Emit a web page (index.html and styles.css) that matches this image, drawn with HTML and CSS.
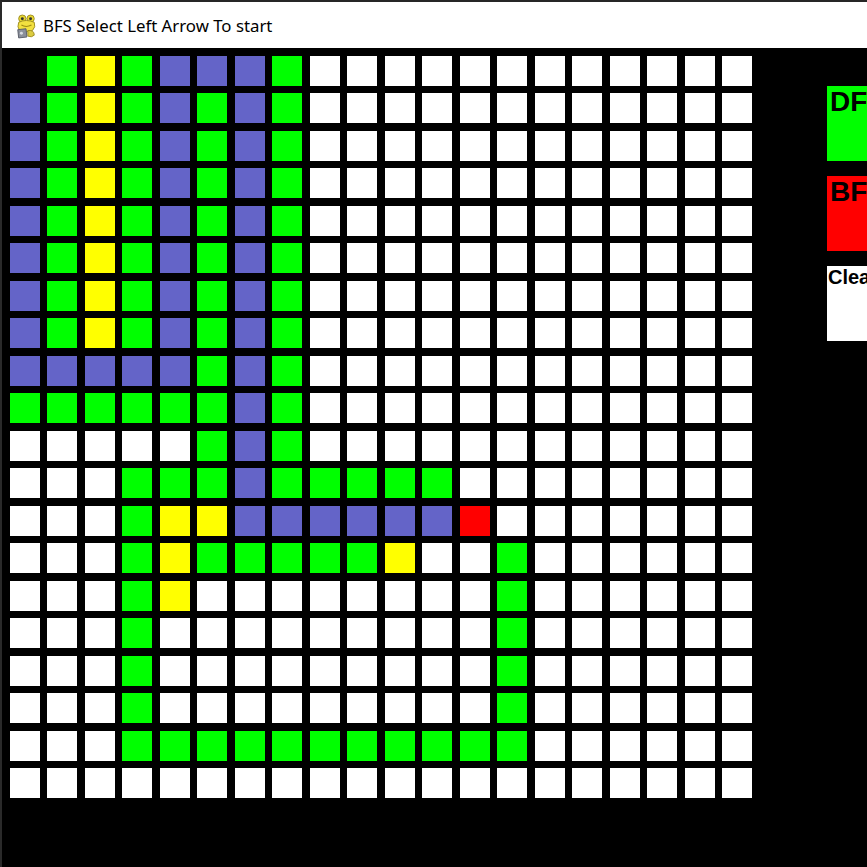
FILE: index.html
```html
<!DOCTYPE html>
<html>
<head>
<meta charset="utf-8">
<title>BFS Select Left Arrow To start</title>
<link rel="stylesheet" href="styles.css">
</head>
<body>
<div class="window">
  <header class="titlebar">
    <svg class="app-icon" width="22" height="26" viewBox="0 0 24 28">
      <ellipse cx="8" cy="6" rx="4" ry="4" fill="#e8d830" stroke="#9a8a20" stroke-width="1"/>
      <ellipse cx="17" cy="6" rx="4" ry="4" fill="#e8d830" stroke="#9a8a20" stroke-width="1"/>
      <circle cx="8" cy="6" r="1.6" fill="#333"/>
      <circle cx="17" cy="6" r="1.6" fill="#333"/>
      <path d="M4 10 Q12 6 21 10 Q23 15 19 19 Q12 22 5 19 Q2 15 4 10 Z" fill="#f2e040" stroke="#9a8a20" stroke-width="1"/>
      <path d="M7 13 Q12 16 18 13" fill="none" stroke="#a08a10" stroke-width="1.2"/>
      <path d="M3 18 L12 17 L13 26 L4 27 Z" fill="#8a8f9a" stroke="#555a66" stroke-width="1"/>
      <circle cx="7" cy="22" r="1.6" fill="#d8dce2"/>
      <path d="M14 19 Q21 18 21 24 Q18 27 14 25 Z" fill="#dccc40" stroke="#9a8a20" stroke-width="1"/>
    </svg>
    <span class="title">BFS Select Left Arrow To start</span>
  </header>
  <main class="content">
    <div class="grid">
      <i class="k"></i><i class="g"></i><i class="y"></i><i class="g"></i><i class="p"></i><i class="p"></i><i class="p"></i><i class="g"></i><i></i><i></i><i></i><i></i><i></i><i></i><i></i><i></i><i></i><i></i><i></i><i></i>
      <i class="p"></i><i class="g"></i><i class="y"></i><i class="g"></i><i class="p"></i><i class="g"></i><i class="p"></i><i class="g"></i><i></i><i></i><i></i><i></i><i></i><i></i><i></i><i></i><i></i><i></i><i></i><i></i>
      <i class="p"></i><i class="g"></i><i class="y"></i><i class="g"></i><i class="p"></i><i class="g"></i><i class="p"></i><i class="g"></i><i></i><i></i><i></i><i></i><i></i><i></i><i></i><i></i><i></i><i></i><i></i><i></i>
      <i class="p"></i><i class="g"></i><i class="y"></i><i class="g"></i><i class="p"></i><i class="g"></i><i class="p"></i><i class="g"></i><i></i><i></i><i></i><i></i><i></i><i></i><i></i><i></i><i></i><i></i><i></i><i></i>
      <i class="p"></i><i class="g"></i><i class="y"></i><i class="g"></i><i class="p"></i><i class="g"></i><i class="p"></i><i class="g"></i><i></i><i></i><i></i><i></i><i></i><i></i><i></i><i></i><i></i><i></i><i></i><i></i>
      <i class="p"></i><i class="g"></i><i class="y"></i><i class="g"></i><i class="p"></i><i class="g"></i><i class="p"></i><i class="g"></i><i></i><i></i><i></i><i></i><i></i><i></i><i></i><i></i><i></i><i></i><i></i><i></i>
      <i class="p"></i><i class="g"></i><i class="y"></i><i class="g"></i><i class="p"></i><i class="g"></i><i class="p"></i><i class="g"></i><i></i><i></i><i></i><i></i><i></i><i></i><i></i><i></i><i></i><i></i><i></i><i></i>
      <i class="p"></i><i class="g"></i><i class="y"></i><i class="g"></i><i class="p"></i><i class="g"></i><i class="p"></i><i class="g"></i><i></i><i></i><i></i><i></i><i></i><i></i><i></i><i></i><i></i><i></i><i></i><i></i>
      <i class="p"></i><i class="p"></i><i class="p"></i><i class="p"></i><i class="p"></i><i class="g"></i><i class="p"></i><i class="g"></i><i></i><i></i><i></i><i></i><i></i><i></i><i></i><i></i><i></i><i></i><i></i><i></i>
      <i class="g"></i><i class="g"></i><i class="g"></i><i class="g"></i><i class="g"></i><i class="g"></i><i class="p"></i><i class="g"></i><i></i><i></i><i></i><i></i><i></i><i></i><i></i><i></i><i></i><i></i><i></i><i></i>
      <i></i><i></i><i></i><i></i><i></i><i class="g"></i><i class="p"></i><i class="g"></i><i></i><i></i><i></i><i></i><i></i><i></i><i></i><i></i><i></i><i></i><i></i><i></i>
      <i></i><i></i><i></i><i class="g"></i><i class="g"></i><i class="g"></i><i class="p"></i><i class="g"></i><i class="g"></i><i class="g"></i><i class="g"></i><i class="g"></i><i></i><i></i><i></i><i></i><i></i><i></i><i></i><i></i>
      <i></i><i></i><i></i><i class="g"></i><i class="y"></i><i class="y"></i><i class="p"></i><i class="p"></i><i class="p"></i><i class="p"></i><i class="p"></i><i class="p"></i><i class="r"></i><i></i><i></i><i></i><i></i><i></i><i></i><i></i>
      <i></i><i></i><i></i><i class="g"></i><i class="y"></i><i class="g"></i><i class="g"></i><i class="g"></i><i class="g"></i><i class="g"></i><i class="y"></i><i></i><i></i><i class="g"></i><i></i><i></i><i></i><i></i><i></i><i></i>
      <i></i><i></i><i></i><i class="g"></i><i class="y"></i><i></i><i></i><i></i><i></i><i></i><i></i><i></i><i></i><i class="g"></i><i></i><i></i><i></i><i></i><i></i><i></i>
      <i></i><i></i><i></i><i class="g"></i><i></i><i></i><i></i><i></i><i></i><i></i><i></i><i></i><i></i><i class="g"></i><i></i><i></i><i></i><i></i><i></i><i></i>
      <i></i><i></i><i></i><i class="g"></i><i></i><i></i><i></i><i></i><i></i><i></i><i></i><i></i><i></i><i class="g"></i><i></i><i></i><i></i><i></i><i></i><i></i>
      <i></i><i></i><i></i><i class="g"></i><i></i><i></i><i></i><i></i><i></i><i></i><i></i><i></i><i></i><i class="g"></i><i></i><i></i><i></i><i></i><i></i><i></i>
      <i></i><i></i><i></i><i class="g"></i><i class="g"></i><i class="g"></i><i class="g"></i><i class="g"></i><i class="g"></i><i class="g"></i><i class="g"></i><i class="g"></i><i class="g"></i><i class="g"></i><i></i><i></i><i></i><i></i><i></i><i></i>
      <i></i><i></i><i></i><i></i><i></i><i></i><i></i><i></i><i></i><i></i><i></i><i></i><i></i><i></i><i></i><i></i><i></i><i></i><i></i><i></i>
    </div>
    <aside class="panel">
      <div class="btn btn-dfs">DFS</div>
      <div class="btn btn-bfs">BFS</div>
      <div class="btn btn-clear">Clear</div>
    </aside>
  </main>
</div>
</body>
</html>
```
FILE: styles.css
```css
html, body {
  margin: 0;
  padding: 0;
  background: #000;
  overflow: hidden;
  width: 867px;
  height: 867px;
}

.window {
  width: 865px;
  height: 865px;
  border-top: 2px solid #262626;
  border-left: 2px solid #2a2a2a;
  background: #000;
  display: flex;
  flex-direction: column;
}

.titlebar {
  height: 46px;
  background: #fff;
  display: flex;
  align-items: center;
  padding-left: 13px;
  gap: 6px;
  flex: none;
}

.app-icon {
  display: block;
  margin-top: 1px;
}

.title {
  font-family: "Noto Sans", "Open Sans", sans-serif;
  font-size: 16.8px;
  color: #000;
  letter-spacing: 0;
}

.content {
  display: flex;
  align-items: flex-start;
  flex: 1;
}

.grid {
  display: grid;
  grid-template-columns: repeat(20, 30px);
  grid-auto-rows: 30px;
  gap: 7.5px;
  padding: 7.5px;
  flex: none;
}

.grid i {
  display: block;
  background: #fff;
}

.grid i.g { background: #00ff00; }
.grid i.y { background: #ffff00; }
.grid i.p { background: #6464c8; }
.grid i.r { background: #ff0000; }
.grid i.k { background: #000; }

.panel {
  margin-left: 67.5px;
  margin-top: 38px;
  display: flex;
  flex-direction: column;
  gap: 15px;
  flex: none;
}

.btn {
  width: 150px;
  height: 75px;
  font-family: "Liberation Sans", Arial, sans-serif;
  font-weight: bold;
  color: #000;
  box-sizing: border-box;
  white-space: nowrap;
}

.btn-dfs {
  background: #00ff00;
  font-size: 28px;
  line-height: 28px;
  padding: 2px 0 0 3px;
}

.btn-bfs {
  background: #ff0000;
  font-size: 28px;
  line-height: 28px;
  padding: 2px 0 0 3px;
}

.btn-clear {
  background: #fff;
  font-size: 20px;
  line-height: 20px;
  padding: 1px 0 0 1px;
}
```
